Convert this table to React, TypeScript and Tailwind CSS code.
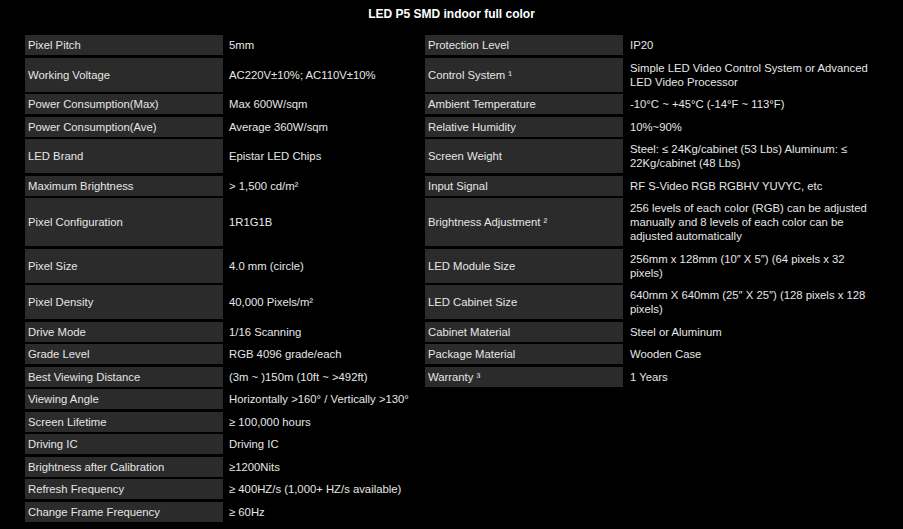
import { Fragment, type ReactNode } from 'react'

type Row = [string, ReactNode, string?, ReactNode?]

const rows: Row[] = [
  ['Pixel Pitch', '5mm', 'Protection Level', 'IP20'],
  ['Working Voltage', 'AC220V±10%; AC110V±10%', 'Control System ¹', <>Simple LED Video Control System or Advanced<br />LED Video Processor</>],
  ['Power Consumption(Max)', 'Max 600W/sqm', 'Ambient Temperature', '-10°C ~ +45°C (-14°F ~ 113°F)'],
  ['Power Consumption(Ave)', 'Average 360W/sqm', 'Relative Humidity', '10%~90%'],
  ['LED Brand', 'Epistar LED Chips', 'Screen Weight', <>Steel: ≤ 24Kg/cabinet (53 Lbs) Aluminum: ≤<br />22Kg/cabinet (48 Lbs)</>],
  ['Maximum Brightness', '> 1,500 cd/m²', 'Input Signal', 'RF S-Video RGB RGBHV YUVYC, etc'],
  ['Pixel Configuration', '1R1G1B', 'Brightness Adjustment ²', <>256 levels of each color (RGB) can be adjusted<br />manually and 8 levels of each color can be<br />adjusted automatically</>],
  ['Pixel Size', '4.0 mm (circle)', 'LED Module Size', <>256mm x 128mm (10″ X 5″) (64 pixels x 32<br />pixels)</>],
  ['Pixel Density', '40,000 Pixels/m²', 'LED Cabinet Size', <>640mm X 640mm (25″ X 25″) (128 pixels x 128<br />pixels)</>],
  ['Drive Mode', '1/16 Scanning', 'Cabinet Material', 'Steel or Aluminum'],
  ['Grade Level', 'RGB 4096 grade/each', 'Package Material', 'Wooden Case'],
  ['Best Viewing Distance', '(3m ~ )150m (10ft ~ >492ft)', 'Warranty ³', '1 Years'],
  ['Viewing Angle', 'Horizontally >160° / Vertically >130°'],
  ['Screen Lifetime', '≥ 100,000 hours'],
  ['Driving IC', 'Driving IC'],
  ['Brightness after Calibration', '≥1200Nits'],
  ['Refresh Frequency', '≥ 400HZ/s (1,000+ HZ/s available)'],
  ['Change Frame Frequency', '≥ 60Hz'],
]

export default function App() {
  return (
    <div className="min-h-[529px] bg-black text-[#e6e6e6] font-['Liberation_Sans',Arial,sans-serif] pt-[7px]">
      <h1 className="text-center text-[12px] leading-[14px] font-bold text-white mb-[14px]">
        LED P5 SMD indoor full color
      </h1>
      <div className="mx-auto w-[853px] grid grid-cols-[198px_196px_198px_1fr] gap-x-[3px] gap-y-[2.5px] text-[11.3px] leading-[14px]">
        {rows.map(([label, value, rLabel, rValue], i) => (
          <Fragment key={i}>
            <div className="bg-[#2b2b2b] px-[3px] py-[3px] flex items-center whitespace-nowrap">{label}</div>
            <div className="px-[3px] py-[3px] flex items-center whitespace-nowrap">{value}</div>
            {rLabel ? (
              <div className="bg-[#2b2b2b] px-[3px] py-[3px] flex items-center whitespace-nowrap">{rLabel}</div>
            ) : (
              <div />
            )}
            <div className="pl-[4px] pr-[3px] py-[3px] flex items-center whitespace-nowrap">{rValue}</div>
          </Fragment>
        ))}
      </div>
    </div>
  )
}
